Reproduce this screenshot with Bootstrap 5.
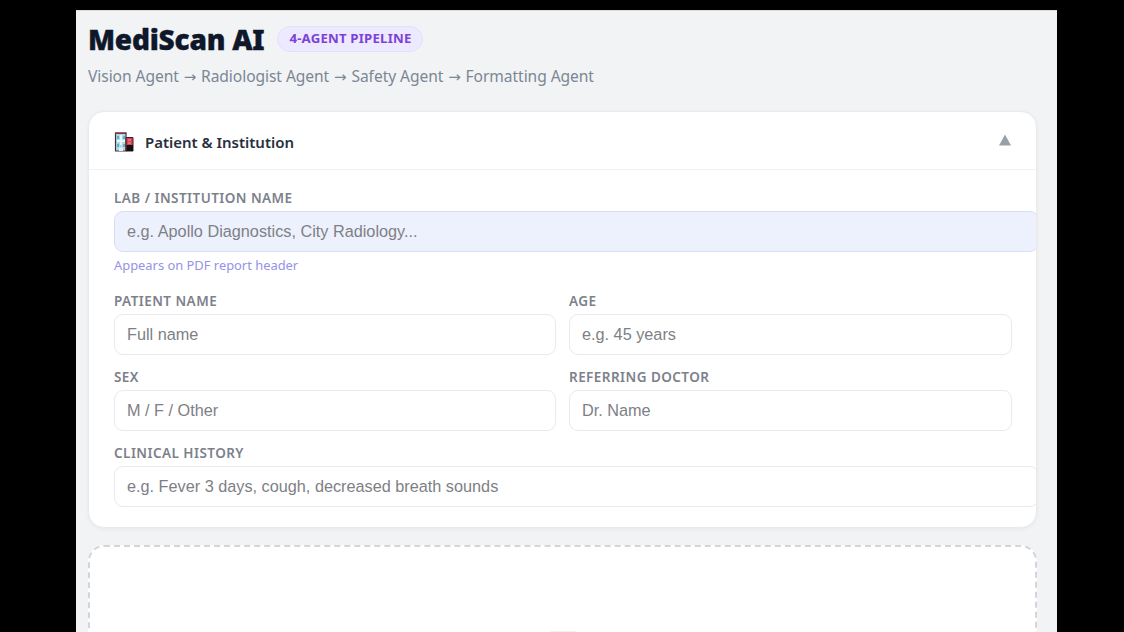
<!DOCTYPE html>
<html lang="en">
<head>
<meta charset="utf-8">
<meta name="viewport" content="width=device-width, initial-scale=1">
<title>MediScan AI</title>
<link href="https://cdn.jsdelivr.net/npm/bootstrap@5.3.0/dist/css/bootstrap.min.css" rel="stylesheet">
<style>
html, body { height: 100%; overflow: hidden; }
body { background: #000; font-family: "Noto Sans", "Open Sans", sans-serif; }
.app-shell { width: 981px; height: 622px; margin: 10px 0 0 76px; padding: 11px 20px 0 12px; background: #f2f3f5; border-top: 1px solid #dcdddf; }
.app-title { font: 900 28px/34px "Noto Sans", "Open Sans", sans-serif; color: #0f172a; letter-spacing: -.22px; -webkit-text-stroke: .35px #0f172a; }
.pill { height: 26px; padding: 0 11px; margin-left: 13px; border: 1px solid #e6dffc; background: #ede9fe; color: #7c42d8; font-weight: 700; font-size: 13.200px; letter-spacing: .2px; }
.flow-line { font-size: 15.6px; line-height: 22px; height: 22px; color: #7b8794; margin-top: 9px; letter-spacing: -.07px; }
.flow-arrow { font-family: "DejaVu Sans", sans-serif; font-size: 15px; line-height: 1; margin: 0 .9px; }
.panel { width: 949px; height: 417px; margin-top: 24px; border: 1px solid #e9eaed; border-radius: 16px; box-shadow: 0 1px 4px rgba(0,0,0,.05); overflow: hidden; }
.panel-head { height: 58px; padding: 3px 25px 0; border-bottom: 1px solid #f1f2f4; }
.panel-title { font-size: 15px; font-weight: 600; color: #29303d; margin-left: 11px; letter-spacing: -.02px; }
.panel-body { padding: 20px 25px 0 25px; }
.field-label { display: block; height: 21px; line-height: 16px; font-size: 13.5px; font-weight: 600; color: #7c818b; letter-spacing: .45px; white-space: nowrap; }
.field-box { height: 41px; padding: 0 12px 1px; border: 1px solid #e9eaed; border-radius: 9px; font: 16.25px "Liberation Sans", Arial, sans-serif; color: #333; }
.field-box::placeholder { color: #7e8085; }
.field-wide { width: 925px; }
.field-tint, .field-tint:focus { background: #edf1fd; border-color: #d5def5; }
.field-hint { font-size: 12.9px; line-height: 18px; margin: 4px 0 19px; color: #9493e8; }
.pair { display: grid; grid-template-columns: 442px 443px; column-gap: 13px; }
.row-gap-top { margin-top: 14px; }
.drop-area { width: 949px; height: 260px; margin-top: 17px; border: 2px dashed #d3d5da; border-radius: 16px; background: #fff; padding-top: 84px; }
.drop-mark { width: 28px; height: 10px; background: #efeff0; border-radius: 3px; }
</style>
</head>
<body>
<main class="app-shell overflow-hidden">
  <header>
    <div class="d-flex align-items-center">
      <h1 class="app-title mb-0 text-nowrap">MediScan AI</h1>
      <span class="pill rounded-pill d-inline-flex align-items-center text-nowrap">4-AGENT PIPELINE</span>
    </div>
    <p class="flow-line mb-0 text-nowrap">Vision Agent <span class="flow-arrow">→</span> Radiologist Agent <span class="flow-arrow">→</span> Safety Agent <span class="flow-arrow">→</span> Formatting Agent</p>
  </header>
  <section class="panel bg-white">
    <div class="panel-head d-flex align-items-center justify-content-between">
      <div class="d-flex align-items-center">
        <svg width="20" height="20" viewBox="0 0 20 20" aria-hidden="true">
          <path d="M1.500 1h10.500v18H1.500z" fill="#a9dce8" stroke="#40313a" stroke-width="1.2"/>
          <path d="M12 5.500h7V19h-7z" fill="#d9404d" stroke="#3b2128" stroke-width="1"/>
          <path d="M12.500 13h6.500v6h-6.500z" fill="#111"/>
          <path d="M1 1.200h11.500" stroke="#8d3340" stroke-width="1.400"/>
          <path d="M3 4h2v3H3zM9 4h2v3H9zM3 12h2v3H3zM9 12h2v3H9z" fill="#6eaac4"/>
          <path d="M7 3v10M3 9h8" stroke="#edfaff" stroke-width="1.800"/>
          <path d="M14 8h3M14 11h3" stroke="#f4a0a5"/>
          <path d="M5 15.500h4V19H5z" fill="#e8eef2"/>
        </svg>
        <h2 class="panel-title mb-0 text-nowrap">Patient &amp; Institution</h2>
      </div>
      <svg class="mb-1" width="12" height="12" viewBox="0 0 12 12" aria-hidden="true"><path d="M6 .5 12 11.500H0z" fill="#9aa0a8"/></svg>
    </div>
    <div class="panel-body">
      <label class="field-label" for="lab">LAB / INSTITUTION NAME</label>
      <input id="lab" class="form-control field-box field-wide field-tint" placeholder="e.g. Apollo Diagnostics, City Radiology...">
      <div class="field-hint">Appears on PDF report header</div>
      <div class="pair">
        <div><label class="field-label" for="pname">PATIENT NAME</label><input id="pname" class="form-control field-box" placeholder="Full name"></div>
        <div><label class="field-label" for="age">AGE</label><input id="age" class="form-control field-box" placeholder="e.g. 45 years"></div>
      </div>
      <div class="pair row-gap-top">
        <div><label class="field-label" for="sex">SEX</label><input id="sex" class="form-control field-box" placeholder="M / F / Other"></div>
        <div><label class="field-label" for="doc">REFERRING DOCTOR</label><input id="doc" class="form-control field-box" placeholder="Dr. Name"></div>
      </div>
      <div class="row-gap-top"><label class="field-label" for="hist">CLINICAL HISTORY</label><input id="hist" class="form-control field-box field-wide" placeholder="e.g. Fever 3 days, cough, decreased breath sounds"></div>
    </div>
  </section>
  <section class="drop-area"><div class="drop-mark mx-auto"></div></section>
</main>
</body>
</html>
